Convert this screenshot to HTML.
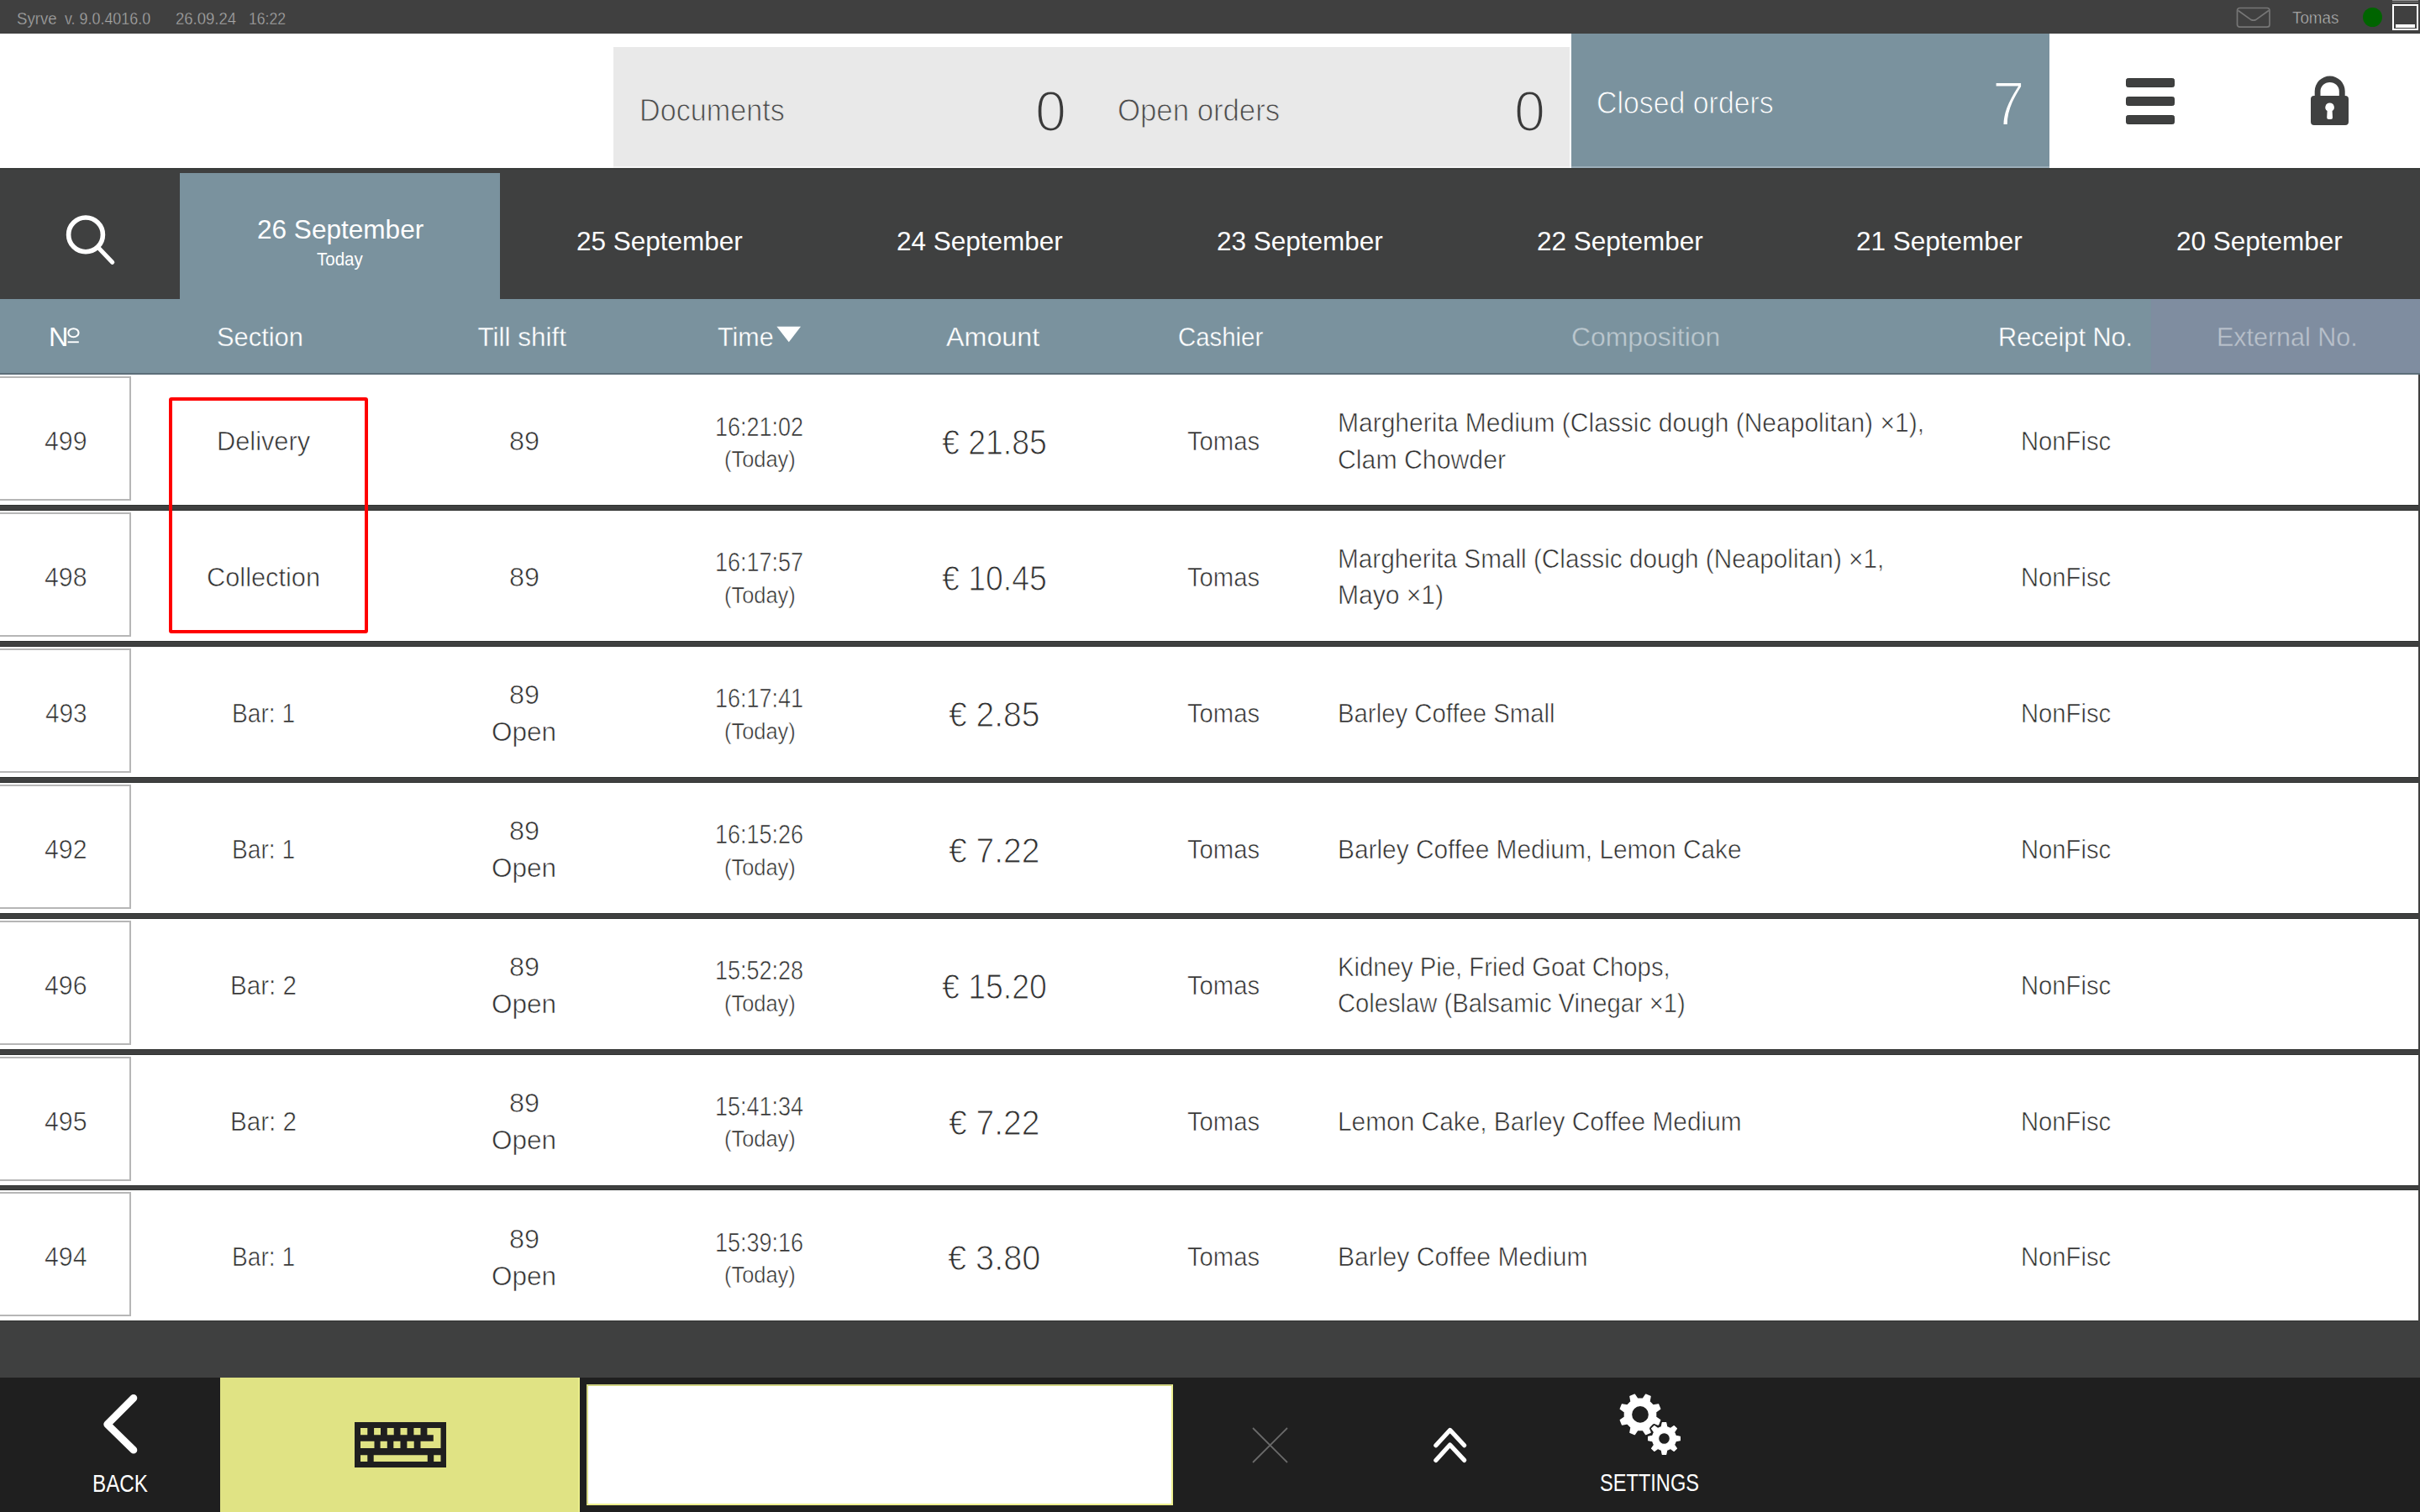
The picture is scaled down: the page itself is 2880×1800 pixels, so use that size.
<!DOCTYPE html>
<html lang="en">
<head>
<meta charset="utf-8">
<title>Syrve - Closed orders</title>
<style>
html,body{margin:0;padding:0;background:#3f4040;}
body{width:2880px;height:1800px;overflow:hidden;font-family:"Liberation Sans",sans-serif;}
#app{position:relative;width:2880px;height:1800px;overflow:hidden;background:#3f4040;}
.g{position:static;display:block;margin:0;padding:0;}
.b{position:absolute;}
.t{position:absolute;white-space:pre;line-height:1;transform-origin:0 0;font-family:"Liberation Sans",sans-serif;}
svg{position:absolute;overflow:visible;}
.row{position:absolute;left:0;width:2878px;height:155px;background:#fff;box-shadow:0 1px 0 #303231,0 -1px 0 #303231;}
.nb{position:absolute;left:-2px;top:2px;width:154px;height:144px;border:2px solid #b6b6b6;background:#fff;}
</style>
</head>
<body>
<div id="app">
<header class="g" id="statusbar" aria-label="Status bar">
<div class="b" style="left:0;top:0;width:2880px;height:40px;background:#404040"></div>
<svg style="left:2661px;top:8px" width="42" height="26" viewBox="0 0 42 26"><rect x="1.5" y="1.5" width="38.5" height="22.7" rx="3" fill="none" stroke="#767676" stroke-width="1.7"/><path d="M2.5 4.5 L18 15.6 Q20.75 16.6 23.5 15.6 L39 4.5" fill="none" stroke="#767676" stroke-width="1.7" stroke-linejoin="round"/></svg>
<div class="b" style="left:2811.5px;top:9px;width:23px;height:23px;border-radius:50%;background:#006400"></div>
<div class="b" style="left:2847px;top:4.5px;width:26.5px;height:27px;border:2.4px solid #fff"></div>
<div class="b" style="left:2851px;top:29px;width:23px;height:3.5px;background:#fff"></div>
<div class="b" style="left:2847px;top:0;width:31px;height:1px;background:#9a9a9a"></div>
<div class="b" style="left:2847px;top:2px;width:31px;height:1px;background:#777"></div>
<span class="t" style="left:19.9px;top:10.84px;font-size:21px;color:#a8a8a8;transform:scaleX(0.887);-webkit-text-stroke:0.35px #404040;">Syrve</span>
<span class="t" style="left:77.0px;top:10.86px;font-size:21px;color:#a8a8a8;transform:scaleX(0.852);-webkit-text-stroke:0.35px #404040;">v. 9.0.4016.0</span>
<span class="t" style="left:208.9px;top:10.84px;font-size:21px;color:#a8a8a8;transform:scaleX(0.882);-webkit-text-stroke:0.35px #404040;">26.09.24</span>
<span class="t" style="left:295.9px;top:10.85px;font-size:21px;color:#a8a8a8;transform:scaleX(0.839);-webkit-text-stroke:0.35px #404040;">16:22</span>
<span class="t" style="left:2727.5px;top:12.31px;font-size:19.5px;color:#bdbdbd;transform:scaleX(0.965);-webkit-text-stroke:0.5px #404040;">Tomas</span>
</header>
<section class="g" id="tiles" aria-label="Order counters">
<div class="b" style="left:0;top:40px;width:2880px;height:160px;background:#fff"></div>
<div class="b" style="left:730px;top:56px;width:1138px;height:142px;background:#e9e9e9"></div>
<div class="b" style="left:730px;top:198px;width:1138px;height:2px;background:#f5f5f5"></div>
<div class="b" style="left:1869.5px;top:40px;width:569.5px;height:158px;background:#7a929e"></div>
<div class="b" style="left:1869.5px;top:198px;width:569.5px;height:2px;background:#9caeb9"></div>
<div class="b" style="left:2529.5px;top:92.5px;width:58.5px;height:11.5px;border-radius:2.5px;background:#3f4040;box-sizing:border-box;border:1px solid #373938"></div>
<div class="b" style="left:2529.5px;top:114.5px;width:58.5px;height:11.5px;border-radius:2.5px;background:#3f4040;box-sizing:border-box;border:1px solid #373938"></div>
<div class="b" style="left:2529.5px;top:136.5px;width:58.5px;height:11.5px;border-radius:2.5px;background:#3f4040;box-sizing:border-box;border:1px solid #373938"></div>
<svg style="left:2748px;top:88px" width="50" height="64" viewBox="0 0 50 64"><path fill="#3f4040" fill-rule="evenodd" d="M6.7 26 V20.6 A18 18 0 0 1 42.7 20.6 V26 H43 Q47 26 47 30 V57 Q47 61 43 61 H6 Q2 61 2 57 V30 Q2 26 6 26 Z M13.5 26 H35.8 V20.6 A11.15 10.6 0 0 0 13.5 20.6 Z M24.6 34.5 A5.2 5.2 0 0 0 21.6 44 L21.2 52 Q21.2 54 23.2 54 H26 Q28 54 28 52 L27.6 44 A5.2 5.2 0 0 0 24.6 34.5 Z"/></svg>
<span class="t" style="left:761.1px;top:112.68px;font-size:37px;color:#4a4a4a;transform:scaleX(0.923);-webkit-text-stroke:0.9px #e9e9e9;">Documents</span>
<span class="t" style="left:1231.7px;top:98.44px;font-size:68px;color:#3a3a3a;transform:scaleX(0.978);-webkit-text-stroke:2.2px #e9e9e9;">0</span>
<span class="t" style="left:1330.2px;top:112.68px;font-size:37px;color:#4a4a4a;transform:scaleX(0.939);-webkit-text-stroke:0.9px #e9e9e9;">Open orders</span>
<span class="t" style="left:1802.0px;top:98.44px;font-size:68px;color:#3a3a3a;transform:scaleX(0.978);-webkit-text-stroke:2.2px #e9e9e9;">0</span>
<span class="t" style="left:1900.2px;top:103.68px;font-size:37px;color:#ffffff;transform:scaleX(0.915);-webkit-text-stroke:0.9px #7a929e;">Closed orders</span>
<span class="t" style="left:2371.2px;top:87.16px;font-size:74px;color:#ffffff;transform:scaleX(0.938);-webkit-text-stroke:2.2px #7a929e;">7</span>
</section>
<nav class="g" id="dates" aria-label="Date tabs">
<div class="b" style="left:0;top:200px;width:2880px;height:156px;background:#3f4040;border-top:2px solid #393b3a;box-sizing:border-box"></div>
<div class="b" style="left:214px;top:206px;width:381px;height:150px;background:#7a929e"></div>
<svg style="left:70px;top:250px" width="80" height="80" viewBox="0 0 80 80"><circle cx="32" cy="29.4" r="20.4" fill="none" stroke="#fff" stroke-width="5.6"/><path d="M46.5 44.3 L63.7 62.2" stroke="#fff" stroke-width="5.2" stroke-linecap="round"/></svg>
<span class="t" style="left:305.5px;top:257.01px;font-size:32px;color:#fff;transform:scaleX(0.986);">26 September</span>
<span class="t" style="left:377.4px;top:297.89px;font-size:22.5px;color:#fff;transform:scaleX(0.912);">Today</span>
<span class="t" style="left:685.9px;top:270.71px;font-size:32px;color:#fff;transform:scaleX(0.984);">25 September</span>
<span class="t" style="left:1066.8px;top:270.71px;font-size:32px;color:#fff;transform:scaleX(0.984);">24 September</span>
<span class="t" style="left:1447.7px;top:270.71px;font-size:32px;color:#fff;transform:scaleX(0.984);">23 September</span>
<span class="t" style="left:1828.5px;top:270.71px;font-size:32px;color:#fff;transform:scaleX(0.984);">22 September</span>
<span class="t" style="left:2209.4px;top:270.71px;font-size:32px;color:#fff;transform:scaleX(0.984);">21 September</span>
<span class="t" style="left:2590.2px;top:270.71px;font-size:32px;color:#fff;transform:scaleX(0.984);">20 September</span>
</nav>
<main class="g" id="orders" aria-label="Closed orders">
<div class="g" id="colhead">
<div class="b" style="left:0;top:356px;width:2880px;height:89px;background:#7a929e"></div>
<div class="b" style="left:2560px;top:356px;width:320px;height:89px;background:#7f8da0"></div>
<svg style="left:924px;top:388px" width="30" height="20" viewBox="0 0 30 20"><path d="M0.4 0.8 H29 L14.8 19.2 Z" fill="#fff"/></svg>
<svg style="left:78px;top:388px" width="20" height="24" viewBox="0 0 20 24"><ellipse cx="9.45" cy="8.2" rx="6.1" ry="5" fill="none" stroke="#fff" stroke-width="2.1"/><rect x="2.6" y="18.3" width="13.2" height="1.9" fill="#fff"/></svg>
<span class="t" style="left:58.2px;top:386.34px;font-size:31.5px;color:#fff;transform:scaleX(1.029);">N</span>
<span class="t" style="left:258.3px;top:386.34px;font-size:31.5px;color:#fff;transform:scaleX(0.979);-webkit-text-stroke:0.35px #7a929e;">Section</span>
<span class="t" style="left:568.4px;top:386.34px;font-size:31.5px;color:#fff;-webkit-text-stroke:0.35px #7a929e;">Till shift</span>
<span class="t" style="left:853.9px;top:386.34px;font-size:31.5px;color:#fff;transform:scaleX(0.968);-webkit-text-stroke:0.35px #7a929e;">Time</span>
<span class="t" style="left:1125.6px;top:386.34px;font-size:31.5px;color:#fff;transform:scaleX(1.024);-webkit-text-stroke:0.35px #7a929e;">Amount</span>
<span class="t" style="left:1402.4px;top:386.34px;font-size:31.5px;color:#fff;transform:scaleX(0.932);-webkit-text-stroke:0.35px #7a929e;">Cashier</span>
<span class="t" style="left:1870.4px;top:386.34px;font-size:31.5px;color:#bcc8cf;transform:scaleX(1.012);-webkit-text-stroke:0.35px #7a929e;">Composition</span>
<span class="t" style="left:2377.5px;top:386.34px;font-size:31.5px;color:#fff;transform:scaleX(0.973);-webkit-text-stroke:0.35px #7a929e;">Receipt No.</span>
<span class="t" style="left:2638.2px;top:386.34px;font-size:31.5px;color:#b9c1cb;transform:scaleX(0.967);-webkit-text-stroke:0.35px #7f8da0;">External No.</span>
</div>
<div class="g order" id="row0">
<div class="b" style="left:0;top:444px;width:2880px;height:2px;background:#5c6e79"></div>
<div class="row" style="top:446px;box-shadow:0 1px 0 #303231"><div class="nb"></div></div>
<span class="t" style="left:53.3px;top:509.76px;font-size:31px;color:#303030;transform:scaleX(0.978);-webkit-text-stroke:0.6px #fff;">499</span>
<span class="t" style="left:257.9px;top:509.76px;font-size:31px;color:#303030;transform:scaleX(0.992);-webkit-text-stroke:0.6px #fff;">Delivery</span>
<span class="t" style="left:605.5px;top:509.76px;font-size:31px;color:#303030;transform:scaleX(1.047);-webkit-text-stroke:0.6px #fff;">89</span>
<span class="t" style="left:851.0px;top:492.76px;font-size:31px;color:#303030;transform:scaleX(0.871);-webkit-text-stroke:0.6px #fff;">16:21:02</span>
<span class="t" style="left:861.6px;top:534.14px;font-size:27px;color:#303030;transform:scaleX(0.941);-webkit-text-stroke:0.5px #fff;">(Today)</span>
<span class="t" style="left:1120.6px;top:504.60px;font-size:43px;color:#303030;transform:scaleX(0.870);-webkit-text-stroke:1.0px #fff;">€ 21.85</span>
<span class="t" style="left:1412.5px;top:509.76px;font-size:31px;color:#303030;transform:scaleX(0.943);-webkit-text-stroke:0.6px #fff;">Tomas</span>
<span class="t" style="left:1591.5px;top:487.76px;font-size:31px;color:#303030;transform:scaleX(0.968);-webkit-text-stroke:0.6px #fff;">Margherita Medium (Classic dough (Neapolitan) ×1),</span>
<span class="t" style="left:1591.5px;top:531.76px;font-size:31px;color:#303030;transform:scaleX(0.976);-webkit-text-stroke:0.6px #fff;">Clam Chowder</span>
<span class="t" style="left:2404.9px;top:509.76px;font-size:31px;color:#303030;transform:scaleX(0.942);-webkit-text-stroke:0.6px #fff;">NonFisc</span>
</div>
<div class="g order" id="row1">
<div class="row" style="top:608px"><div class="nb"></div></div>
<span class="t" style="left:53.3px;top:671.56px;font-size:31px;color:#303030;transform:scaleX(0.978);-webkit-text-stroke:0.6px #fff;">498</span>
<span class="t" style="left:245.9px;top:671.56px;font-size:31px;color:#303030;transform:scaleX(0.992);-webkit-text-stroke:0.6px #fff;">Collection</span>
<span class="t" style="left:605.5px;top:671.56px;font-size:31px;color:#303030;transform:scaleX(1.047);-webkit-text-stroke:0.6px #fff;">89</span>
<span class="t" style="left:851.0px;top:653.96px;font-size:31px;color:#303030;transform:scaleX(0.871);-webkit-text-stroke:0.6px #fff;">16:17:57</span>
<span class="t" style="left:861.6px;top:695.94px;font-size:27px;color:#303030;transform:scaleX(0.941);-webkit-text-stroke:0.5px #fff;">(Today)</span>
<span class="t" style="left:1120.6px;top:667.30px;font-size:43px;color:#303030;transform:scaleX(0.870);-webkit-text-stroke:1.0px #fff;">€ 10.45</span>
<span class="t" style="left:1412.5px;top:671.56px;font-size:31px;color:#303030;transform:scaleX(0.943);-webkit-text-stroke:0.6px #fff;">Tomas</span>
<span class="t" style="left:1591.5px;top:649.56px;font-size:31px;color:#303030;transform:scaleX(0.959);-webkit-text-stroke:0.6px #fff;">Margherita Small (Classic dough (Neapolitan) ×1,</span>
<span class="t" style="left:1591.5px;top:692.96px;font-size:31px;color:#303030;transform:scaleX(0.969);-webkit-text-stroke:0.6px #fff;">Mayo ×1)</span>
<span class="t" style="left:2404.9px;top:671.56px;font-size:31px;color:#303030;transform:scaleX(0.942);-webkit-text-stroke:0.6px #fff;">NonFisc</span>
</div>
<div class="g order" id="row2">
<div class="row" style="top:770px"><div class="nb"></div></div>
<span class="t" style="left:53.8px;top:834.16px;font-size:31px;color:#303030;transform:scaleX(0.959);-webkit-text-stroke:0.6px #fff;">493</span>
<span class="t" style="left:275.9px;top:834.16px;font-size:31px;color:#303030;transform:scaleX(0.908);-webkit-text-stroke:0.6px #fff;">Bar: 1</span>
<span class="t" style="left:605.5px;top:811.96px;font-size:31px;color:#303030;transform:scaleX(1.047);-webkit-text-stroke:0.6px #fff;">89</span>
<span class="t" style="left:585.0px;top:855.96px;font-size:31px;color:#303030;transform:scaleX(1.017);-webkit-text-stroke:0.6px #fff;">Open</span>
<span class="t" style="left:851.0px;top:816.36px;font-size:31px;color:#303030;transform:scaleX(0.871);-webkit-text-stroke:0.6px #fff;">16:17:41</span>
<span class="t" style="left:861.6px;top:857.74px;font-size:27px;color:#303030;transform:scaleX(0.941);-webkit-text-stroke:0.5px #fff;">(Today)</span>
<span class="t" style="left:1128.8px;top:829.20px;font-size:43px;color:#303030;transform:scaleX(0.906);-webkit-text-stroke:1.0px #fff;">€ 2.85</span>
<span class="t" style="left:1412.5px;top:834.16px;font-size:31px;color:#303030;transform:scaleX(0.943);-webkit-text-stroke:0.6px #fff;">Tomas</span>
<span class="t" style="left:1591.5px;top:834.16px;font-size:31px;color:#303030;transform:scaleX(0.946);-webkit-text-stroke:0.6px #fff;">Barley Coffee Small</span>
<span class="t" style="left:2404.9px;top:834.16px;font-size:31px;color:#303030;transform:scaleX(0.942);-webkit-text-stroke:0.6px #fff;">NonFisc</span>
</div>
<div class="g order" id="row3">
<div class="row" style="top:932px"><div class="nb"></div></div>
<span class="t" style="left:53.3px;top:996.16px;font-size:31px;color:#303030;transform:scaleX(0.978);-webkit-text-stroke:0.6px #fff;">492</span>
<span class="t" style="left:275.9px;top:996.16px;font-size:31px;color:#303030;transform:scaleX(0.908);-webkit-text-stroke:0.6px #fff;">Bar: 1</span>
<span class="t" style="left:605.5px;top:973.76px;font-size:31px;color:#303030;transform:scaleX(1.047);-webkit-text-stroke:0.6px #fff;">89</span>
<span class="t" style="left:585.0px;top:1017.76px;font-size:31px;color:#303030;transform:scaleX(1.017);-webkit-text-stroke:0.6px #fff;">Open</span>
<span class="t" style="left:851.0px;top:978.16px;font-size:31px;color:#303030;transform:scaleX(0.871);-webkit-text-stroke:0.6px #fff;">16:15:26</span>
<span class="t" style="left:861.6px;top:1019.54px;font-size:27px;color:#303030;transform:scaleX(0.941);-webkit-text-stroke:0.5px #fff;">(Today)</span>
<span class="t" style="left:1128.8px;top:991.00px;font-size:43px;color:#303030;transform:scaleX(0.906);-webkit-text-stroke:1.0px #fff;">€ 7.22</span>
<span class="t" style="left:1412.5px;top:996.16px;font-size:31px;color:#303030;transform:scaleX(0.943);-webkit-text-stroke:0.6px #fff;">Tomas</span>
<span class="t" style="left:1591.5px;top:996.16px;font-size:31px;color:#303030;transform:scaleX(0.963);-webkit-text-stroke:0.6px #fff;">Barley Coffee Medium, Lemon Cake</span>
<span class="t" style="left:2404.9px;top:996.16px;font-size:31px;color:#303030;transform:scaleX(0.942);-webkit-text-stroke:0.6px #fff;">NonFisc</span>
</div>
<div class="g order" id="row4">
<div class="row" style="top:1094px"><div class="nb"></div></div>
<span class="t" style="left:53.3px;top:1157.96px;font-size:31px;color:#303030;transform:scaleX(0.978);-webkit-text-stroke:0.6px #fff;">496</span>
<span class="t" style="left:273.9px;top:1157.96px;font-size:31px;color:#303030;transform:scaleX(0.956);-webkit-text-stroke:0.6px #fff;">Bar: 2</span>
<span class="t" style="left:605.5px;top:1135.56px;font-size:31px;color:#303030;transform:scaleX(1.047);-webkit-text-stroke:0.6px #fff;">89</span>
<span class="t" style="left:585.0px;top:1179.56px;font-size:31px;color:#303030;transform:scaleX(1.017);-webkit-text-stroke:0.6px #fff;">Open</span>
<span class="t" style="left:851.0px;top:1139.96px;font-size:31px;color:#303030;transform:scaleX(0.871);-webkit-text-stroke:0.6px #fff;">15:52:28</span>
<span class="t" style="left:861.6px;top:1181.94px;font-size:27px;color:#303030;transform:scaleX(0.941);-webkit-text-stroke:0.5px #fff;">(Today)</span>
<span class="t" style="left:1120.6px;top:1152.80px;font-size:43px;color:#303030;transform:scaleX(0.870);-webkit-text-stroke:1.0px #fff;">€ 15.20</span>
<span class="t" style="left:1412.5px;top:1157.96px;font-size:31px;color:#303030;transform:scaleX(0.943);-webkit-text-stroke:0.6px #fff;">Tomas</span>
<span class="t" style="left:1591.5px;top:1135.96px;font-size:31px;color:#303030;transform:scaleX(0.945);-webkit-text-stroke:0.6px #fff;">Kidney Pie, Fried Goat Chops,</span>
<span class="t" style="left:1591.5px;top:1178.96px;font-size:31px;color:#303030;transform:scaleX(0.941);-webkit-text-stroke:0.6px #fff;">Coleslaw (Balsamic Vinegar ×1)</span>
<span class="t" style="left:2404.9px;top:1157.96px;font-size:31px;color:#303030;transform:scaleX(0.942);-webkit-text-stroke:0.6px #fff;">NonFisc</span>
</div>
<div class="g order" id="row5">
<div class="row" style="top:1256px"><div class="nb"></div></div>
<span class="t" style="left:53.3px;top:1319.76px;font-size:31px;color:#303030;transform:scaleX(0.978);-webkit-text-stroke:0.6px #fff;">495</span>
<span class="t" style="left:273.9px;top:1319.76px;font-size:31px;color:#303030;transform:scaleX(0.956);-webkit-text-stroke:0.6px #fff;">Bar: 2</span>
<span class="t" style="left:605.5px;top:1298.16px;font-size:31px;color:#303030;transform:scaleX(1.047);-webkit-text-stroke:0.6px #fff;">89</span>
<span class="t" style="left:585.0px;top:1342.16px;font-size:31px;color:#303030;transform:scaleX(1.017);-webkit-text-stroke:0.6px #fff;">Open</span>
<span class="t" style="left:851.0px;top:1301.76px;font-size:31px;color:#303030;transform:scaleX(0.871);-webkit-text-stroke:0.6px #fff;">15:41:34</span>
<span class="t" style="left:861.6px;top:1343.14px;font-size:27px;color:#303030;transform:scaleX(0.941);-webkit-text-stroke:0.5px #fff;">(Today)</span>
<span class="t" style="left:1128.8px;top:1314.60px;font-size:43px;color:#303030;transform:scaleX(0.906);-webkit-text-stroke:1.0px #fff;">€ 7.22</span>
<span class="t" style="left:1412.5px;top:1319.76px;font-size:31px;color:#303030;transform:scaleX(0.943);-webkit-text-stroke:0.6px #fff;">Tomas</span>
<span class="t" style="left:1591.5px;top:1319.76px;font-size:31px;color:#303030;transform:scaleX(0.963);-webkit-text-stroke:0.6px #fff;">Lemon Cake, Barley Coffee Medium</span>
<span class="t" style="left:2404.9px;top:1319.76px;font-size:31px;color:#303030;transform:scaleX(0.942);-webkit-text-stroke:0.6px #fff;">NonFisc</span>
</div>
<div class="g order" id="row6">
<div class="row" style="top:1417px"><div class="nb"></div></div>
<span class="t" style="left:53.3px;top:1480.96px;font-size:31px;color:#303030;transform:scaleX(0.978);-webkit-text-stroke:0.6px #fff;">494</span>
<span class="t" style="left:275.9px;top:1480.96px;font-size:31px;color:#303030;transform:scaleX(0.908);-webkit-text-stroke:0.6px #fff;">Bar: 1</span>
<span class="t" style="left:605.5px;top:1460.16px;font-size:31px;color:#303030;transform:scaleX(1.047);-webkit-text-stroke:0.6px #fff;">89</span>
<span class="t" style="left:585.0px;top:1504.16px;font-size:31px;color:#303030;transform:scaleX(1.017);-webkit-text-stroke:0.6px #fff;">Open</span>
<span class="t" style="left:851.0px;top:1463.56px;font-size:31px;color:#303030;transform:scaleX(0.871);-webkit-text-stroke:0.6px #fff;">15:39:16</span>
<span class="t" style="left:861.6px;top:1504.94px;font-size:27px;color:#303030;transform:scaleX(0.941);-webkit-text-stroke:0.5px #fff;">(Today)</span>
<span class="t" style="left:1127.8px;top:1476.40px;font-size:43px;color:#303030;transform:scaleX(0.923);-webkit-text-stroke:1.0px #fff;">€ 3.80</span>
<span class="t" style="left:1412.5px;top:1480.96px;font-size:31px;color:#303030;transform:scaleX(0.943);-webkit-text-stroke:0.6px #fff;">Tomas</span>
<span class="t" style="left:1591.5px;top:1480.96px;font-size:31px;color:#303030;transform:scaleX(0.972);-webkit-text-stroke:0.6px #fff;">Barley Coffee Medium</span>
<span class="t" style="left:2404.9px;top:1480.96px;font-size:31px;color:#303030;transform:scaleX(0.942);-webkit-text-stroke:0.6px #fff;">NonFisc</span>
</div>
<div class="g" id="highlight">
<div class="b" style="left:200.5px;top:473px;width:229px;height:273px;border:4px solid #ff0000;border-radius:3px"></div>
</div>
</main>
<footer class="g" id="toolbar" aria-label="Toolbar">
<div class="b" style="left:0;top:1640px;width:2880px;height:160px;background:#1f1f1f"></div>
<div class="b" style="left:262px;top:1640px;width:428px;height:160px;background:#e0e384;box-sizing:border-box;border-right:2px solid #e9ed8a"></div>
<div class="b" style="left:698px;top:1647.5px;width:694.4px;height:140.5px;background:#fff;border:2px solid;border-color:#cfd281 #eef08e #eef08e #d6d986"></div>
<svg style="left:110px;top:1650px" width="70" height="90" viewBox="0 0 70 90"><path d="M48.9 14.3 L17.7 45.6 L48.9 76.2" fill="none" stroke="#fff" stroke-width="8.8" stroke-linecap="round" stroke-linejoin="round"/></svg>
<svg style="left:422px;top:1692.5px" width="109" height="54" viewBox="0 0 109 54"><path fill="#1f1f1f" fill-rule="evenodd" d="M0 0 H109 V54 H0 Z M7 7 H15.3 V15.3 H7 Z M23.1 7 H31 V15.3 H23.1 Z M38.8 7 H46.7 V15.3 H38.8 Z M54.5 7 H62.6 V15.3 H54.5 Z M70.4 7 H78.5 V15.3 H70.4 Z M86.4 7 H102.5 V31 H78.5 V22.7 H93.8 V15.3 H86.4 Z M7 22.7 H23.5 V31 H7 Z M30.6 22.7 H38.8 V31 H30.6 Z M46.3 22.7 H54.5 V31 H46.3 Z M62.4 22.7 H70.7 V31 H62.4 Z M7 39.3 H15.3 V47.1 H7 Z M22.7 39.3 H86.8 V47.1 H22.7 Z M94.2 39.3 H102.5 V47.1 H94.2 Z "/></svg>
<svg style="left:1490px;top:1699px" width="44" height="44" viewBox="0 0 44 44"><path d="M1 1 L42 42 M42 1 L1 42" stroke="#6a6a6a" stroke-width="1.8" fill="none"/></svg>
<svg style="left:1700px;top:1692px" width="52" height="56" viewBox="0 0 52 56"><path d="M8.8 28.7 L25.6 10.4 L42.7 28.7 M8.8 46.4 L25.6 28.1 L42.7 46.4" fill="none" stroke="#fff" stroke-width="5.2" stroke-linejoin="round" stroke-linecap="round"/></svg>
<svg style="left:1880px;top:1640px" width="180" height="100" viewBox="0 0 180 100"><path fill="#fff" fill-rule="evenodd" stroke="#fff" stroke-width="1.5" stroke-linejoin="round" d="M90.54 47.04 L95.68 50.58 L93.46 55.92 L87.33 54.79 L82.89 59.23 L84.02 65.36 L78.68 67.58 L75.14 62.44 L68.86 62.44 L65.32 67.58 L59.98 65.36 L61.11 59.23 L56.67 54.79 L50.54 55.92 L48.32 50.58 L53.46 47.04 L53.46 40.76 L48.32 37.22 L50.54 31.88 L56.67 33.01 L61.11 28.57 L59.98 22.44 L65.32 20.22 L68.86 25.36 L75.14 25.36 L78.68 20.22 L84.02 22.44 L82.89 28.57 L87.33 33.01 L93.46 31.88 L95.68 37.22 L90.54 40.76 Z M82.60 43.90 A10.6 10.6 0 1 0 61.40 43.90 A10.6 10.6 0 1 0 82.60 43.90 Z"/><path fill="none" stroke="#1f1f1f" stroke-width="5" stroke-linejoin="round" d="M114.34 69.33 L119.37 70.27 L119.37 74.73 L114.34 75.67 L112.53 80.05 L115.42 84.26 L112.26 87.42 L108.05 84.53 L103.67 86.34 L102.73 91.37 L98.27 91.37 L97.33 86.34 L92.95 84.53 L88.74 87.42 L85.58 84.26 L88.47 80.05 L86.66 75.67 L81.63 74.73 L81.63 70.27 L86.66 69.33 L88.47 64.95 L85.58 60.74 L88.74 57.58 L92.95 60.47 L97.33 58.66 L98.27 53.63 L102.73 53.63 L103.67 58.66 L108.05 60.47 L112.26 57.58 L115.42 60.74 L112.53 64.95 Z"/><path fill="#fff" fill-rule="evenodd" stroke="#fff" stroke-width="1.2" stroke-linejoin="round" d="M114.34 69.33 L119.37 70.27 L119.37 74.73 L114.34 75.67 L112.53 80.05 L115.42 84.26 L112.26 87.42 L108.05 84.53 L103.67 86.34 L102.73 91.37 L98.27 91.37 L97.33 86.34 L92.95 84.53 L88.74 87.42 L85.58 84.26 L88.47 80.05 L86.66 75.67 L81.63 74.73 L81.63 70.27 L86.66 69.33 L88.47 64.95 L85.58 60.74 L88.74 57.58 L92.95 60.47 L97.33 58.66 L98.27 53.63 L102.73 53.63 L103.67 58.66 L108.05 60.47 L112.26 57.58 L115.42 60.74 L112.53 64.95 Z M107.40 72.50 A6.9 6.9 0 1 0 93.60 72.50 A6.9 6.9 0 1 0 107.40 72.50 Z"/></svg>
<span class="t" style="left:110.2px;top:1750.83px;font-size:29.5px;color:#fff;transform:scaleX(0.821);">BACK</span>
<span class="t" style="left:1903.8px;top:1750.28px;font-size:29.5px;color:#fff;transform:scaleX(0.800);">SETTINGS</span>
</footer>
</div>
</body>
</html>
